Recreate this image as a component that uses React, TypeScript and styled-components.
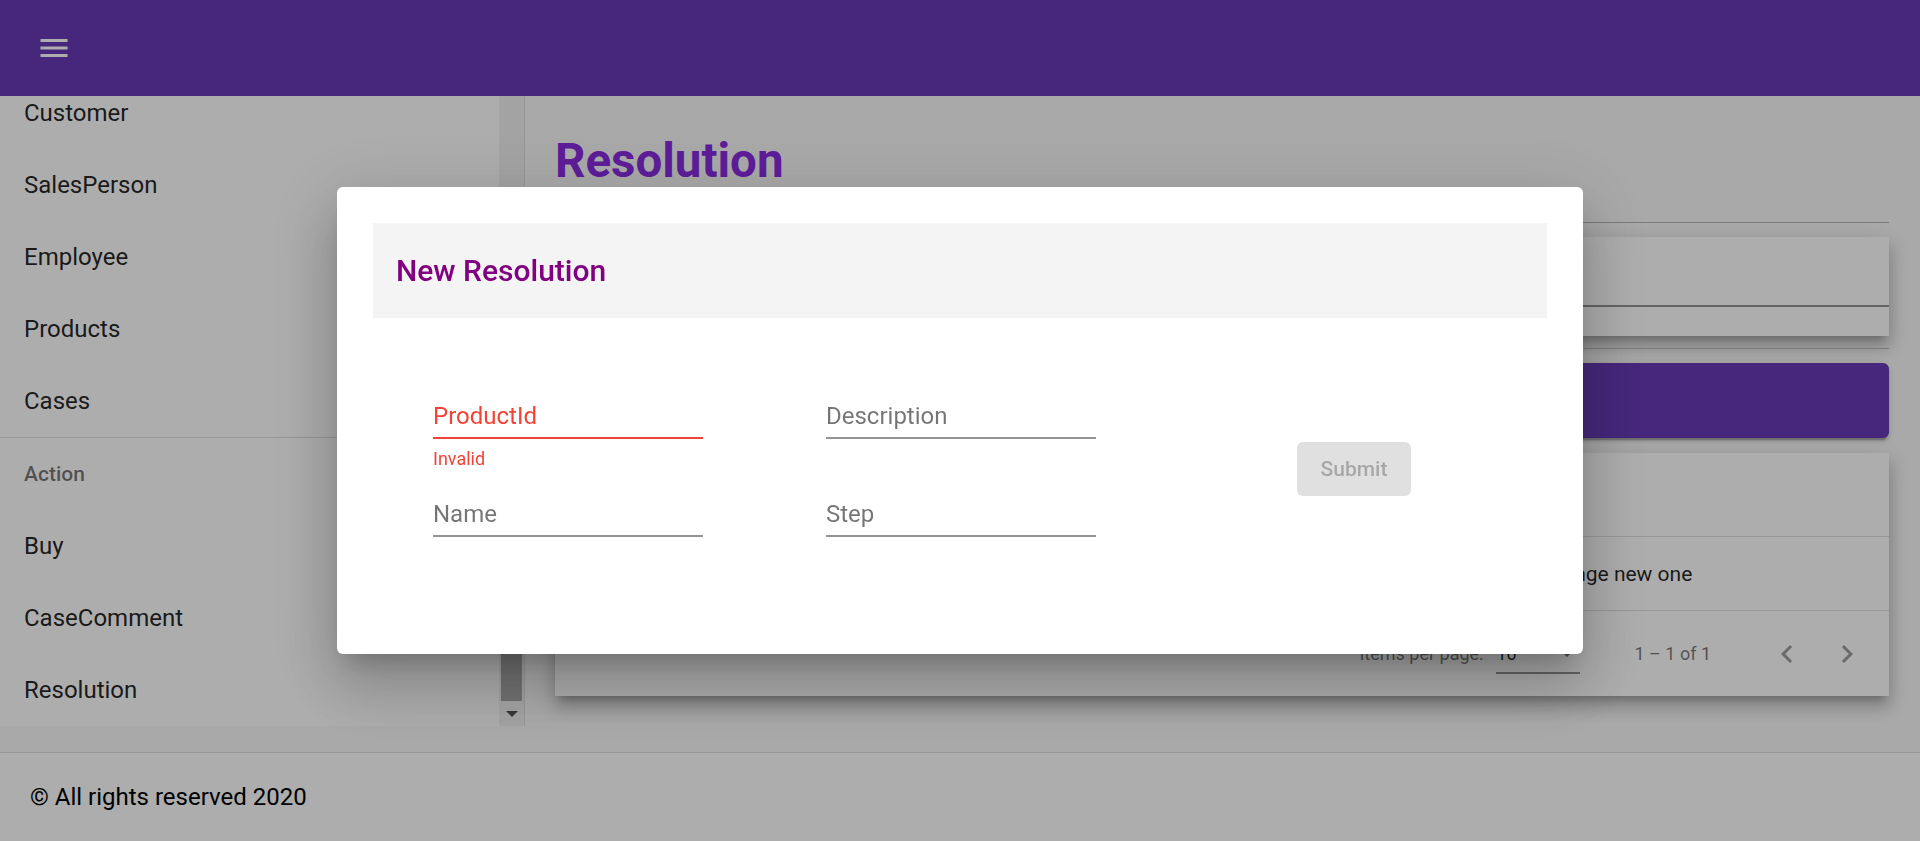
import React from 'react';
import styled, { createGlobalStyle } from 'styled-components';

const deepPurple = '#673ab7';

const GlobalStyle = createGlobalStyle`
  html, body {
    margin: 0;
    padding: 0;
    height: 100%;
  }
  body {
    font-family: Roboto, "Helvetica Neue", "Liberation Sans", sans-serif;
    background: #fafafa;
    overflow: hidden;
  }
  *, *::before, *::after {
    box-sizing: border-box;
  }
`;

const Page = styled.div`
  height: 841px;
  display: flex;
  flex-direction: column;
`;

const TopBar = styled.header`
  height: 96px;
  flex: none;
  display: flex;
  align-items: center;
  padding: 0 24px;
  background: ${deepPurple};
`;

const IconButton = styled.button<{ $muted?: boolean }>`
  width: 60px;
  height: 60px;
  padding: 0;
  border: 0;
  background: transparent;
  display: flex;
  align-items: center;
  justify-content: center;
  color: ${props => (props.$muted ? 'rgba(0, 0, 0, 0.38)' : '#fff')};

  svg {
    width: 36px;
    height: 36px;
    fill: currentColor;
  }
`;

const Body = styled.div`
  height: 630px;
  flex: none;
  display: flex;
`;

const Sidebar = styled.nav`
  width: 525px;
  flex: none;
  display: flex;
  background: #fff;
  border-right: 1px solid rgba(0, 0, 0, 0.12);
  overflow: hidden;
`;

const NavList = styled.ul`
  flex: 1;
  list-style: none;
  margin: -19px 0 0;
  padding: 0;
`;

const NavItem = styled.li`
  height: 72px;
  display: flex;
  align-items: center;
  padding-left: 24px;
  font-size: 24px;
  color: rgba(0, 0, 0, 0.87);
`;

const NavSubheader = styled.li`
  height: 72px;
  display: flex;
  align-items: center;
  padding-left: 24px;
  font-size: 21px;
  font-weight: 500;
  color: rgba(0, 0, 0, 0.54);
`;

const NavDivider = styled.li`
  height: 1px;
  background: rgba(0, 0, 0, 0.12);
`;

// fake classic scrollbar, list is scrolled to the bottom
const ScrollTrack = styled.div`
  width: 25px;
  flex: none;
  display: flex;
  flex-direction: column;
  justify-content: flex-end;
  align-items: center;
  background: #f1f1f1;
`;

const ScrollThumb = styled.div`
  width: 21px;
  height: 305px;
  background: #a8a8a8;
`;

const ScrollArrow = styled.div`
  width: 100%;
  height: 25px;
  display: flex;
  align-items: center;
  justify-content: center;

  &::after {
    content: '';
    border-left: 6px solid transparent;
    border-right: 6px solid transparent;
    border-top: 6px solid #505050;
  }
`;

const Main = styled.main`
  flex: 1;
  min-width: 0;
  display: flex;
  flex-direction: column;
  padding: 38px 31px 0 30px;
  overflow: hidden;
`;

const PageTitle = styled.h1`
  margin: 0;
  font-size: 47.5px;
  line-height: 55px;
  font-weight: 700;
  color: #8a2be2;
`;

const Rule = styled.hr<{ $gap: number }>`
  margin: ${props => props.$gap}px 0 0;
  height: 1px;
  border: 0;
  background: #b5b5b5;
  flex: none;
`;

const cardShadow =
  '0 7.5px 7.5px -4.5px rgba(0,0,0,.2), 0 12px 15px 1.5px rgba(0,0,0,.14), 0 4.5px 21px 3px rgba(0,0,0,.12)';

const FilterCard = styled.section`
  margin-top: 14px;
  height: 99px;
  flex: none;
  padding-left: 36px;
  background: #fff;
  box-shadow: ${cardShadow};
`;

const FilterField = styled.div`
  margin-top: 36px;
  display: flex;
  flex-direction: column;
`;

const FilterInput = styled.input`
  height: 28px;
  padding: 0;
  border: 0;
  outline: none;
  background: transparent;
  font-family: inherit;
  font-size: 24px;
`;

const FilterLine = styled.div`
  margin-top: 4px;
  height: 2px;
  background: rgba(0, 0, 0, 0.42);
`;

const AddButton = styled.button`
  margin-top: 14px;
  height: 75px;
  flex: none;
  border: 0;
  border-radius: 6px;
  background: ${deepPurple};
  color: #fff;
  font-family: inherit;
  font-size: 21px;
  font-weight: 500;
  box-shadow: 0 4.5px 1.5px -3px rgba(0, 0, 0, 0.2), 0 3px 3px rgba(0, 0, 0, 0.14),
    0 1.5px 7.5px rgba(0, 0, 0, 0.12);
`;

const TableCard = styled.section`
  margin-top: 15px;
  flex: none;
  background: #fff;
  box-shadow: ${cardShadow};
`;

const TableRow = styled.div<{ $header?: boolean }>`
  display: grid;
  grid-template-columns: repeat(4, 1fr);
  align-items: center;
  padding: 0 36px;
  height: ${props => (props.$header ? 84 : 74)}px;
  border-bottom: 1px solid rgba(0, 0, 0, 0.12);
  font-size: ${props => (props.$header ? 18 : 21)}px;
  font-weight: ${props => (props.$header ? 500 : 400)};
  color: ${props => (props.$header ? 'rgba(0, 0, 0, 0.54)' : 'rgba(0, 0, 0, 0.87)')};
`;

const Paginator = styled.div`
  height: 85px;
  display: flex;
  align-items: center;
  justify-content: flex-end;
  padding: 0 12px;
  font-size: 18px;
  color: rgba(0, 0, 0, 0.54);
`;

const PageSizeLabel = styled.span`
  margin-right: 13px;
`;

const PageSelect = styled.div`
  width: 84px;
  padding-top: 10px;
  display: flex;
  flex-direction: column;
`;

const PageSelectValue = styled.div`
  height: 21px;
  display: flex;
  align-items: center;
  justify-content: space-between;
  color: rgba(0, 0, 0, 0.87);

  &::after {
    content: '';
    margin-right: 6px;
    border-left: 7px solid transparent;
    border-right: 7px solid transparent;
    border-top: 7px solid rgba(0, 0, 0, 0.54);
  }
`;

const PageSelectLine = styled.div`
  margin-top: 8px;
  height: 2px;
  background: rgba(0, 0, 0, 0.42);
`;

const RangeLabel = styled.span`
  margin: 0 46px 0 54px;
`;

const Footer = styled.footer`
  margin-top: 26px;
  flex: 1;
  display: flex;
  align-items: center;
  padding-left: 30px;
  border-top: 1px solid rgba(0, 0, 0, 0.12);
  background: #fff;
  font-size: 24px;
  color: #000;
`;

const Backdrop = styled.div`
  position: fixed;
  inset: 0;
  display: flex;
  align-items: center;
  justify-content: center;
  background: rgba(0, 0, 0, 0.32);
`;

const Dialog = styled.div`
  width: 1246px;
  padding: 36px;
  border-radius: 6px;
  background: #fff;
  box-shadow: 0 16px 22px -10px rgba(0, 0, 0, 0.2), 0 36px 57px 4px rgba(0, 0, 0, 0.14),
    0 13px 69px 12px rgba(0, 0, 0, 0.12);
`;

const DialogHeader = styled.div`
  height: 95px;
  display: flex;
  align-items: center;
  padding-left: 23px;
  background: #f4f4f4;
`;

const DialogTitle = styled.h2`
  margin: 0;
  font-size: 30px;
  font-weight: 500;
  color: #800080;
`;

const FormGrid = styled.form`
  display: grid;
  grid-template-columns: repeat(3, 270px);
  column-gap: 123px;
  row-gap: 31px;
  padding: 84px 0 51px 60px;
`;

const Field = styled.div`
  display: flex;
  flex-direction: column;
`;

const FieldLabel = styled.label<{ $invalid?: boolean }>`
  font-size: 24px;
  line-height: 28px;
  color: ${props => (props.$invalid ? '#f44336' : 'rgba(0, 0, 0, 0.54)')};
`;

const FieldLine = styled.div<{ $invalid?: boolean }>`
  margin-top: 7px;
  height: 2px;
  background: ${props => (props.$invalid ? '#f44336' : 'rgba(0, 0, 0, 0.42)')};
`;

const FieldError = styled.div`
  margin-top: 9px;
  height: 21px;
  font-size: 18px;
  line-height: 21px;
  color: #f44336;
`;

const SubmitButton = styled.button`
  grid-column: 3;
  grid-row: 1 / span 2;
  align-self: start;
  justify-self: center;
  margin-top: 40px;
  height: 54px;
  padding: 0 24px;
  border: 0;
  border-radius: 6px;
  background: #e0e0e0;
  color: rgba(0, 0, 0, 0.26);
  font-family: inherit;
  font-size: 21px;
  font-weight: 500;
`;

const MenuIcon = () => (
  <svg viewBox="0 0 24 24">
    <path d="M3 18h18v-2H3v2zm0-5h18v-2H3v2zm0-7v2h18V6H3z" />
  </svg>
);

const PrevIcon = () => (
  <svg viewBox="0 0 24 24">
    <path d="M15.41 7.41L14 6l-6 6 6 6 1.41-1.41L10.83 12z" />
  </svg>
);

const NextIcon = () => (
  <svg viewBox="0 0 24 24">
    <path d="M10 6L8.59 7.41 13.17 12l-4.58 4.59L10 18l6-6z" />
  </svg>
);

const entities = ['Customer', 'SalesPerson', 'Employee', 'Products', 'Cases'];
const actions = ['Buy', 'CaseComment', 'Resolution'];
const columns = ['ProductId', 'Name', 'Description', 'Step'];
const rows = [{ productId: '1', name: 'Screen', description: 'Broken screen', step: 'Change new one' }];

type FormFieldProps = {
  label: string;
  error?: string;
};

const FormField = ({ label, error }: FormFieldProps) => (
  <Field>
    <FieldLabel $invalid={!!error}>{label}</FieldLabel>
    <FieldLine $invalid={!!error} />
    <FieldError>{error}</FieldError>
  </Field>
);

const App = () => (
  <>
    <GlobalStyle />
    <Page>
      <TopBar>
        <IconButton aria-label="menu">
          <MenuIcon />
        </IconButton>
      </TopBar>
      <Body>
        <Sidebar>
          <NavList>
            {entities.map(name => (
              <NavItem key={name}>{name}</NavItem>
            ))}
            <NavDivider />
            <NavSubheader>Action</NavSubheader>
            {actions.map(name => (
              <NavItem key={name}>{name}</NavItem>
            ))}
          </NavList>
          <ScrollTrack>
            <ScrollThumb />
            <ScrollArrow />
          </ScrollTrack>
        </Sidebar>
        <Main>
          <PageTitle>Resolution</PageTitle>
          <Rule $gap={33} />
          <FilterCard>
            <FilterField>
              <FilterInput aria-label="filter" />
              <FilterLine />
            </FilterField>
          </FilterCard>
          <Rule $gap={12} />
          <AddButton>Add Resolution</AddButton>
          <TableCard>
            <TableRow $header>
              {columns.map(col => (
                <span key={col}>{col}</span>
              ))}
            </TableRow>
            {rows.map(row => (
              <TableRow key={row.productId}>
                <span>{row.productId}</span>
                <span>{row.name}</span>
                <span>{row.description}</span>
                <span>{row.step}</span>
              </TableRow>
            ))}
            <Paginator>
              <PageSizeLabel>Items per page:</PageSizeLabel>
              <PageSelect>
                <PageSelectValue>10</PageSelectValue>
                <PageSelectLine />
              </PageSelect>
              <RangeLabel>1 – 1 of 1</RangeLabel>
              <IconButton $muted aria-label="previous page">
                <PrevIcon />
              </IconButton>
              <IconButton $muted aria-label="next page">
                <NextIcon />
              </IconButton>
            </Paginator>
          </TableCard>
        </Main>
      </Body>
      <Footer>© All rights reserved 2020</Footer>
    </Page>
    <Backdrop>
      <Dialog>
        <DialogHeader>
          <DialogTitle>New Resolution</DialogTitle>
        </DialogHeader>
        <FormGrid>
          <FormField label="ProductId" error="Invalid" />
          <FormField label="Description" />
          <SubmitButton type="button" disabled>
            Submit
          </SubmitButton>
          <FormField label="Name" />
          <FormField label="Step" />
        </FormGrid>
      </Dialog>
    </Backdrop>
  </>
);

export default App;
